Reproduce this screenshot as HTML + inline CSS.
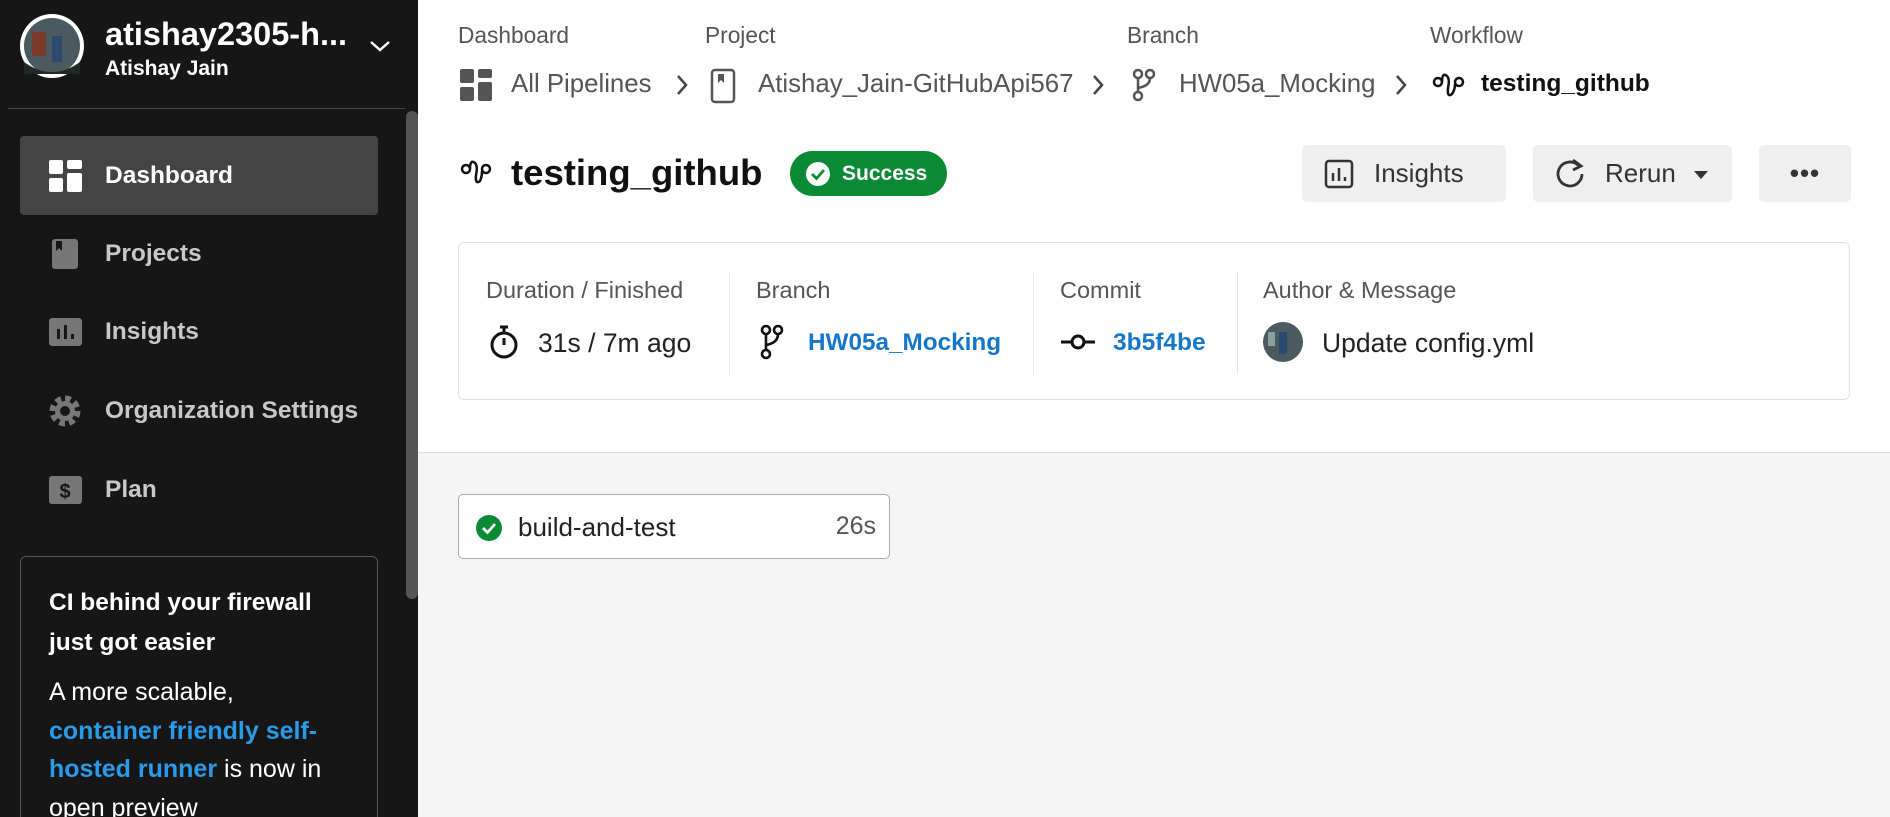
<!DOCTYPE html>
<html><head><meta charset="utf-8"><style>
*{box-sizing:border-box;margin:0;padding:0}
html,body{width:1890px;height:817px;overflow:hidden}
body{font-family:"Liberation Sans",sans-serif;background:#f5f5f5;position:relative}
.abs{position:absolute}
#side{left:0;top:0;width:418px;height:817px;background:#161616;overflow:hidden}
.nav{position:absolute;left:20px;width:358px;height:79px;border-radius:4px;color:#c8c8c8;font-weight:bold;font-size:24.5px;line-height:79px;padding-left:85px}
.nav svg{position:absolute;left:28px;top:23px}
#main{left:418px;top:0;width:1472px;height:453px;background:#fff;border-bottom:1px solid #ddd}
.lbl{position:absolute;top:22px;font-size:22.7px;color:#555}
.bc{position:absolute;top:69px;font-size:25.8px;color:#555;line-height:30px}
.btn{position:absolute;top:145px;height:57px;background:#efefef;border-radius:5px;font-size:26px;color:#333;line-height:57px}
.cl{position:absolute;top:277px;font-size:23.5px;color:#555}
.cv{position:absolute;top:328px;font-size:26.5px;line-height:30px;color:#222}
.dv{position:absolute;top:271px;width:1px;height:103px;background:#e6e6e6}
</style></head><body>
<div id="side" class="abs">
 <svg class="abs" style="left:18px;top:12px" width="68" height="68"><circle cx="34" cy="34" r="32" fill="#fff"/><circle cx="34" cy="34" r="28" fill="#4a5a5e"/><rect x="14" y="20" width="14" height="24" fill="#7a3a2a"/><rect x="34" y="24" width="10" height="26" fill="#2c4a70"/><path d="M6 50 Q34 70 62 50 L62 62 L6 62Z" fill="#1e2a22"/></svg>
 <div class="abs" style="left:105px;top:16px;font-size:32.5px;font-weight:bold;color:#fff">atishay2305-h...</div>
 <div class="abs" style="left:105px;top:57px;font-size:21px;font-weight:bold;color:#fff">Atishay Jain</div>
 <svg class="abs" style="left:368px;top:38px" width="24" height="16"><path d="M3 4 L12 12 L21 4" stroke="#fff" stroke-width="2.5" fill="none"/></svg>
 <div class="abs" style="left:8px;top:108px;width:397px;height:1px;background:#444"></div>
 <div class="abs" style="left:406px;top:111px;width:12px;height:488px;background:#555;border-radius:6px"></div>
 <div class="nav" style="top:136px;background:#444;color:#fff"><svg width="34" height="34"><rect x="1" y="1" width="14" height="14" rx="2" fill="#fff"/><rect x="19" y="1" width="15" height="9" rx="2" fill="#fff"/><rect x="1" y="19" width="14" height="14" rx="2" fill="#fff"/><rect x="19" y="14" width="15" height="19" rx="2" fill="#fff"/></svg>Dashboard</div>
 <div class="nav" style="top:214px"><svg width="34" height="34"><rect x="4" y="2" width="26" height="30" rx="3" fill="#777"/><path d="M8 4 V14 L11 11 L14 14 V4Z" fill="#161616"/></svg>Projects</div>
 <div class="nav" style="top:292px"><svg width="34" height="34"><rect x="1" y="3" width="33" height="28" rx="3" fill="#777"/><rect x="9" y="14" width="3" height="10" fill="#161616"/><rect x="16" y="10" width="3" height="14" fill="#161616"/><rect x="23" y="19" width="3" height="5" fill="#161616"/></svg>Insights</div>
 <div class="nav" style="top:371px"><svg width="34" height="34"><circle cx="17" cy="17" r="11" fill="none" stroke="#777" stroke-width="9" stroke-dasharray="5 3.6"/><circle cx="17" cy="17" r="10" fill="#777"/><circle cx="17" cy="17" r="5" fill="#161616"/></svg>Organization Settings</div>
 <div class="nav" style="top:450px"><svg width="34" height="34"><rect x="1" y="3" width="33" height="28" rx="3" fill="#777"/><text x="17" y="25" text-anchor="middle" font-size="20" font-weight="bold" fill="#161616" font-family="Liberation Sans">$</text></svg>Plan</div>
 <div class="abs" style="left:20px;top:556px;width:358px;height:300px;border:1px solid #555;border-radius:6px;padding:26px 0 0 28px;color:#fff;white-space:nowrap">
  <div style="font-size:24.5px;font-weight:bold;line-height:40px">CI behind your firewall<br>just got easier</div>
  <div style="font-size:25px;line-height:38.5px;margin-top:10px">A more scalable,<br><span style="color:#2a9be8;font-weight:bold">container friendly self-<br>hosted runner</span> is now in<br>open preview</div>
 </div>
</div>
<div id="main" class="abs">
 <div class="lbl" style="left:40px">Dashboard</div>
 <div class="lbl" style="left:287px">Project</div>
 <div class="lbl" style="left:709px">Branch</div>
 <div class="lbl" style="left:1012px">Workflow</div>
 <svg class="abs" style="left:41px;top:68px" width="34" height="34"><rect x="1" y="1" width="14" height="14" rx="2" fill="#555"/><rect x="19" y="1" width="14" height="9" rx="2" fill="#555"/><rect x="1" y="19" width="14" height="14" rx="2" fill="#555"/><rect x="19" y="14" width="14" height="19" rx="2" fill="#555"/></svg>
 <div class="bc" style="left:93px">All Pipelines</div>
 <svg class="abs" style="left:256px;top:73px" width="16" height="24"><path d="M4 3 L12 12 L4 21" stroke="#444" stroke-width="2.5" fill="none"/></svg>
 <svg class="abs" style="left:292px;top:68px" width="26" height="36"><rect x="2" y="2" width="22" height="32" rx="3" stroke="#555" stroke-width="2.5" fill="none"/><path d="M8 6 V15 L11 12 L14 15 V6Z" fill="#555"/></svg>
 <div class="bc" style="left:340px">Atishay_Jain-GitHubApi567</div>
 <svg class="abs" style="left:672px;top:73px" width="16" height="24"><path d="M4 3 L12 12 L4 21" stroke="#444" stroke-width="2.5" fill="none"/></svg>
 <svg class="abs" style="left:713px;top:67px" width="26" height="36"><circle cx="7" cy="7" r="4" stroke="#555" stroke-width="2.5" fill="none"/><circle cx="19" cy="7" r="4" stroke="#555" stroke-width="2.5" fill="none"/><circle cx="7" cy="29" r="4" stroke="#555" stroke-width="2.5" fill="none"/><path d="M7 11 V25 M19 11 Q19 19 7 21" stroke="#555" stroke-width="2.5" fill="none"/></svg>
 <div class="bc" style="left:761px">HW05a_Mocking</div>
 <svg class="abs" style="left:975px;top:73px" width="16" height="24"><path d="M4 3 L12 12 L4 21" stroke="#444" stroke-width="2.5" fill="none"/></svg>
 <svg class="abs" style="left:1014px;top:70px" width="34" height="30"><circle cx="6" cy="12" r="4" stroke="#111" stroke-width="2.5" fill="none"/><circle cx="27" cy="12" r="4" stroke="#111" stroke-width="2.5" fill="none"/><path d="M10 12 Q10 2 15 6 Q18 9 16 18 Q15 28 20 24 Q23 20 23 14" stroke="#111" stroke-width="2.5" fill="none"/></svg>
 <div class="bc" style="left:1063px;color:#111;font-weight:bold;font-size:24.5px">testing_github</div>
 <svg class="abs" style="left:42px;top:158px" width="32" height="30"><circle cx="6" cy="11" r="4" stroke="#111" stroke-width="2.5" fill="none"/><circle cx="26" cy="11" r="4" stroke="#111" stroke-width="2.5" fill="none"/><path d="M10 11 Q10 1 15 5 Q18 8 16 17 Q15 27 20 23 Q22 19 22 13" stroke="#111" stroke-width="2.5" fill="none"/></svg>
 <div class="abs" style="left:93px;top:152px;font-size:36.5px;font-weight:bold;color:#111">testing_github</div>
 <div class="abs" style="left:372px;top:151px;width:157px;height:45px;border-radius:23px;background:#0a8a35;color:#fff;font-weight:bold;font-size:21px;line-height:45px;padding-left:52px">Success
  <svg class="abs" style="left:14px;top:9px" width="28" height="28"><circle cx="14" cy="14" r="12" fill="#fff"/><path d="M8 14 L12.5 18.5 L20 10" stroke="#0a8a35" stroke-width="2.8" fill="none"/></svg></div>
 <div class="btn" style="left:884px;width:204px;padding-left:72px">Insights
  <svg class="abs" style="left:22px;top:14px" width="30" height="30"><rect x="2" y="2" width="26" height="26" rx="3" stroke="#333" stroke-width="2.5" fill="none"/><path d="M9 22V14 M15 22V9 M21 22V18" stroke="#333" stroke-width="2.5"/></svg></div>
 <div class="btn" style="left:1115px;width:199px;padding-left:72px">Rerun
  <svg class="abs" style="left:20px;top:12px" width="34" height="34"><path d="M26 9 A12 12 0 1 0 29 17" stroke="#333" stroke-width="2.8" fill="none"/><path d="M20 3 L28 9 L20 13" stroke="#333" stroke-width="2.8" fill="none"/></svg>
  <svg class="abs" style="left:160px;top:25px" width="16" height="10"><path d="M1 1 L15 1 L8 9Z" fill="#333"/></svg></div>
 <div class="btn" style="left:1341px;width:92px;text-align:center;font-weight:bold;letter-spacing:1px">•••</div>
 <div class="abs" style="left:40px;top:242px;width:1392px;height:158px;border:1px solid #e0e0e0;border-radius:6px"></div>
 <div class="cl" style="left:68px">Duration / Finished</div>
 <div class="cl" style="left:338px">Branch</div>
 <div class="cl" style="left:642px">Commit</div>
 <div class="cl" style="left:845px">Author &amp; Message</div>
 <div class="dv" style="left:311px"></div><div class="dv" style="left:615px"></div><div class="dv" style="left:819px"></div>
 <svg class="abs" style="left:70px;top:323px" width="32" height="38"><circle cx="16" cy="22" r="12" stroke="#111" stroke-width="3" fill="none"/><path d="M16 22 V15 M16 5 V9 M12 4 H20" stroke="#111" stroke-width="3"/></svg>
 <div class="cv" style="left:120px">31s / 7m ago</div>
 <svg class="abs" style="left:342px;top:323px" width="24" height="38"><circle cx="6" cy="7" r="4" stroke="#111" stroke-width="2.6" fill="none"/><circle cx="18" cy="7" r="4" stroke="#111" stroke-width="2.6" fill="none"/><circle cx="6" cy="31" r="4" stroke="#111" stroke-width="2.6" fill="none"/><path d="M6 11 V27 M18 11 Q18 20 6 22" stroke="#111" stroke-width="2.6" fill="none"/></svg>
 <div class="cv" style="left:390px;color:#1477c9;font-weight:bold;font-size:24.3px">HW05a_Mocking</div>
 <svg class="abs" style="left:642px;top:331px" width="36" height="22"><path d="M1 11 H11 M25 11 H35" stroke="#111" stroke-width="3"/><circle cx="18" cy="11" r="6" stroke="#111" stroke-width="3" fill="none"/></svg>
 <div class="cv" style="left:695px;color:#1477c9;font-weight:bold;font-size:24.5px">3b5f4be</div>
 <svg class="abs" style="left:845px;top:322px" width="40" height="40"><circle cx="20" cy="20" r="20" fill="#4a5a5e"/><rect x="16" y="10" width="8" height="22" fill="#2c4a70"/><rect x="5" y="10" width="7" height="14" fill="#8aa0a0"/></svg>
 <div class="cv" style="left:904px">Update config.yml</div>
</div>
<div class="abs" style="left:458px;top:494px;width:432px;height:65px;background:#fff;border:1.5px solid #aaa;border-radius:5px">
 <svg class="abs" style="left:16px;top:19px" width="28" height="28"><circle cx="14" cy="14" r="13" fill="#0a8a35"/><path d="M8 14 L12.5 18.5 L20 10" stroke="#fff" stroke-width="2.8" fill="none"/></svg>
 <div class="abs" style="left:59px;top:17px;font-size:26px;color:#222">build-and-test</div>
 <div class="abs" style="right:13px;top:17px;font-size:25px;color:#555">26s</div>
</div>
</body></html>
